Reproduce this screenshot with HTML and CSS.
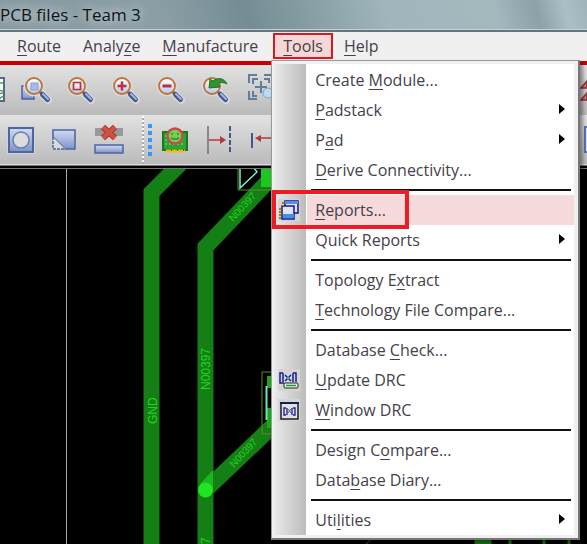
FILE: index.html
```
<!DOCTYPE html>
<html lang="en">
<head>
<meta charset="utf-8">
<title>PCB files - Team 3</title>
<link rel="stylesheet" href="styles.css">
</head>
<body>
<div class="app">
  <header class="titlebar"><span class="title">PCB files - Team 3</span></header>

  <nav class="menubar" aria-label="Main menu">
    <button class="menu-button"><u>R</u>oute</button>
    <button class="menu-button">Analy<u>z</u>e</button>
    <button class="menu-button"><u>M</u>anufacture</button>
    <div class="menu-root">
      <button class="menu-button open" aria-expanded="true"><u>T</u>ools</button>
      <div class="menu" role="menu">
        <button class="item" role="menuitem">Create <u>M</u>odule...</button>
        <button class="item sub" role="menuitem"><u>P</u>adstack</button>
        <button class="item sub" role="menuitem">P<u>a</u>d</button>
        <button class="item" role="menuitem"><u>D</u>erive Connectivity...</button>
        <hr>
        <button class="item selected" role="menuitem">
          <svg class="item-icon" width="22" height="22" viewBox="0 0 22 22"><path d="M0 0h22v22H0z" fill="#d4d4d4"/><path d="M7 2h13v12H7z" fill="#dfe5ff" stroke="#16168c" stroke-width="1.5"/><path d="M7 2h13v3H7z" fill="#5b8fd6"/><path d="M4 7h12v13H4z" fill="#dfe3f4" stroke="#16168c" stroke-width="1.5"/><path d="M5 15h11v4H5z" fill="#3c92e6"/><path d="M2 9v11M5 3v4" stroke="#9a8a00" stroke-width="2" stroke-dasharray="2 1"/><path d="M4 7v12" stroke="#b0283c" stroke-dasharray="2 2"/></svg><u>R</u>eports...</button>
        <button class="item sub" role="menuitem">Quick Reports</button>
        <hr>
        <button class="item" role="menuitem">Topology E<u>x</u>tract</button>
        <button class="item" role="menuitem"><u>T</u>echnology File Compare...</button>
        <hr>
        <button class="item" role="menuitem">Database <u>C</u>heck...</button>
        <button class="item" role="menuitem">
          <svg class="item-icon" width="22" height="22" viewBox="0 0 22 22"><path d="M0 0h22v22H0z" fill="#d4d4d4"/><path d="M5 4H2v10h4M15 4h3v9M5 4v9M15 4v9" fill="none" stroke="#1b1b96" stroke-width="1.5"/><path d="M7 6l6 6M13 6l-6 6" stroke="#1b1b96" stroke-width="1.5"/><path d="M8 9h4" stroke="#3f9dc0" stroke-width="2"/><rect x="6" y="14" width="14" height="5" rx="1" fill="#e8f4e8" stroke="#222"/><path d="M8 16.500h10" stroke="#239a23" stroke-width="1.500"/></svg><u>U</u>pdate DRC</button>
        <button class="item" role="menuitem">
          <svg class="item-icon" width="22" height="22" viewBox="0 0 22 22"><path d="M0 0h22v22H0z" fill="#d4d4d4"/><path d="M3 4h17v16H3z" fill="#e1e1e1" stroke="#1e1e2c" stroke-width="1.500"/><path d="M2 4h19" stroke="#16204a" stroke-width="2"/><path d="M8 9H6v7h2M15 9h2v7h-2M9 9v7M14 9v7" fill="none" stroke="#1b1b96" stroke-width="1.300"/><path d="M10 10l3 4m0-4l-3 4" stroke="#3f6dc0"/></svg><u>W</u>indow DRC</button>
        <hr>
        <button class="item" role="menuitem">Design C<u>o</u>mpare...</button>
        <button class="item" role="menuitem">Data<u>b</u>ase Diary...</button>
        <hr>
        <button class="item sub" role="menuitem">Uti<u>l</u>ities</button>
      </div>
    </div>
    <button class="menu-button"><u>H</u>elp</button>
  </nav>

  <svg class="defs" width="0" height="0" aria-hidden="true">
    <defs>
      <linearGradient id="steel" x1="0" y1="0" x2="0" y2="1"><stop offset="0" stop-color="#d3dbf0"/><stop offset="1" stop-color="#7f93c8"/></linearGradient>
      <linearGradient id="lens" x1="0" y1="0" x2="0" y2="1"><stop offset="0" stop-color="#fff"/><stop offset="1" stop-color="#b8c6ea"/></linearGradient>
      <symbol id="glass" viewBox="0 0 32 32">
        <path d="M18 18l8 8" stroke="#d8d8d8" stroke-width="8" stroke-linecap="round"/>
        <circle cx="12" cy="12" r="10.500" fill="#d8d8d8"/>
        <path d="M17 17l4 4" stroke="#9a5a28" stroke-width="3"/>
        <path d="M20.500 20.500l5 5" stroke="#40578f" stroke-width="5" stroke-linecap="round"/>
        <path d="M21 20l5 5" stroke="#a5b7e0" stroke-width="2" stroke-linecap="round"/>
        <circle cx="12" cy="12" r="8" fill="url(#lens)" stroke="#bd7439" stroke-width="1.800"/>
      </symbol>
    </defs>
  </svg>

  <div class="toolbar" role="toolbar" aria-label="Zoom">
    <button class="tool clipped-start" aria-label="Grid"><svg width="23" height="32" viewBox="0 0 23 32"><path d="M0 4h13v23H0z" fill="#fff" stroke="#50698c" stroke-width="2"/><path d="M0 9h12M0 14c5 0 7 3 12 3M0 23c5 0 7-4 12-4M8 25l4-3" fill="none" stroke="#4ba34b" stroke-width="1.500"/></svg></button>
    <button class="tool" aria-label="Zoom points"><svg width="32" height="32" viewBox="0 0 32 32"><path d="M2 12h12v13H2z" fill="url(#steel)" stroke="#4463a4" stroke-width="1.500"/><use href="#glass" width="32" height="32" x="2"/><path d="M11 9h7v7h-7z" fill="#a9badf" stroke="#8da2d2"/></svg></button>
    <button class="tool" aria-label="Zoom fit"><svg width="32" height="32" viewBox="0 0 32 32"><use href="#glass" width="32" height="32"/><path d="M8.500 8.500h7v7h-7z" fill="#e6e6f2" stroke="#b83236" stroke-width="1.700"/></svg></button>
    <button class="tool" aria-label="Zoom in"><svg width="32" height="32" viewBox="0 0 32 32"><use href="#glass" width="32" height="32"/><path d="M12 7.500v9M7.500 12h9" stroke="#b83236" stroke-width="2.500"/></svg></button>
    <button class="tool" aria-label="Zoom out"><svg width="32" height="32" viewBox="0 0 32 32"><use href="#glass" width="32" height="32"/><path d="M7.500 12h9" stroke="#b83236" stroke-width="3"/></svg></button>
    <button class="tool" aria-label="Zoom previous"><svg width="32" height="32" viewBox="0 0 32 32"><use href="#glass" width="32" height="32"/><path d="M9 14l1-9 3 2c5-4 11-3 14 3-4-2-7-2-9 0l2 3z" fill="#2d9631" stroke="#207324"/></svg></button>
    <button class="tool" aria-label="Zoom center"><svg width="32" height="32" viewBox="0 0 32 32"><path d="M4 9V1h8M19 1h9v8M4 17v8h8M8 10V5h5M19 5h5v4M8 17v5h4M16 7v12M10 13h12" fill="none" stroke="#617d9c" stroke-width="2"/><circle cx="23" cy="19" r="5" fill="#b8dcf4" stroke="#7ba2c6"/></svg></button>
    <button class="tool clipped-end" aria-label="3D view"><svg width="7" height="32" viewBox="0 0 7 32"><path d="M1 14l6-7v7zM1 26l6-7v7z" fill="#c67c80" stroke="#8f3439" stroke-width="1.500"/></svg></button>
  </div>

  <div class="toolbar lower" role="toolbar" aria-label="Shapes">
    <button class="tool first" aria-label="Shape void circle"><svg width="32" height="32" viewBox="0 0 32 32"><path d="M2 2h28v28H2z" fill="#d5d5d5"/><path d="M4 4h24v24H4z" fill="url(#steel)" stroke="#4c669f" stroke-width="2"/><circle cx="16" cy="16" r="8" fill="#dcdcdc" stroke="#697fac" stroke-width="1.500"/></svg></button>
    <button class="tool" aria-label="Shape edit"><svg width="32" height="32" viewBox="0 0 32 32"><path d="M5 6h22v19H17L5 13z" fill="url(#steel)" stroke="#4c669f" stroke-width="1.500"/><path d="M5 13l12 12H5z" fill="#dadada"/><path d="M5 13v12h12" fill="none" stroke="#4c669f" stroke-width="1.500" stroke-dasharray="3 1"/></svg></button>
    <button class="tool" aria-label="Delete islands"><svg width="32" height="32" viewBox="0 0 32 32"><path d="M2 4h28v8H2z" fill="#999"/><path d="M10 3l12 11M22 3L10 14" stroke="#a8352d" stroke-width="6"/><path d="M10 3l12 11M22 3L10 14" stroke="#cf5145" stroke-width="4"/><path d="M2 21h28v8H2z" fill="url(#steel)" stroke="#4c669f" stroke-width="1.500"/></svg></button>
    <span class="grip"></span>
    <span class="dots"></span>
    <button class="tool" aria-label="Board check"><svg width="32" height="32" viewBox="0 0 32 32"><path d="M4 8h24v18H4z" fill="#2da334" stroke="#167c20" stroke-width="2"/><path d="M6 12h20M6 16h20M6 20h20" stroke="#90d78b" stroke-dasharray="2 2"/><path d="M7 27h19" stroke="#f5ba00" stroke-width="3" stroke-dasharray="5 1"/><circle cx="16" cy="12" r="7.500" fill="#79cd56" stroke="#c94b49" stroke-width="2.500"/><path d="M12 10h2M18 10h2M12 14l2 1h4l2-1" fill="none" stroke="#2c8c32" stroke-width="1.500"/></svg></button>
    <button class="tool" aria-label="Spacing right"><svg width="32" height="32" viewBox="0 0 32 32"><path d="M4 2v28" stroke="#888" stroke-width="2"/><path d="M26 2v28" stroke="#40578a" stroke-width="2" stroke-dasharray="5 2"/><path d="M5 16h12" stroke="#b5373b" stroke-width="1.500"/><path d="M16 12l6 4-6 4z" fill="#b5373b"/></svg></button>
    <button class="tool" aria-label="Spacing left"><svg width="32" height="32" viewBox="0 0 32 32"><path d="M3 9v15" stroke="#40578a" stroke-width="2"/><path d="M10 14h20" stroke="#b5373b" stroke-width="1.500"/><path d="M12 11l-6 3 6 4z" fill="#b5373b"/></svg></button>
    <button class="tool clipped-end" aria-label="Window"><svg width="7" height="32" viewBox="0 0 7 32"><path d="M8 3H5v25h3" fill="#dfe5f5" stroke="#5b77b8" stroke-width="2"/></svg></button>
  </div>

  <main class="board">
    <svg class="traces" width="587" height="375" role="img" aria-label="Board traces">
      <path d="M66.500 0v375" stroke="#a8a8a8"/>
      <g fill="none" stroke="#147f14" stroke-width="16">
        <path d="M181-6l-29.500 29.500V375M278 2l-72.500 76V375M205.500 321L278 252"/>
      </g>
      <path d="M200 315l13-14v19z" fill="#1bb81b"/>
      <circle cx="205.500" cy="321" r="7.500" fill="#22e522"/>
      <path d="M261 0h20v18h-20z" fill="#1bc81b"/>
      <path d="M238 0v21h42" fill="none" stroke="#5f8a2d"/>
      <path d="M240 0v19l17-16-3-4" fill="none" stroke="#7ff0c0" stroke-width="1.500"/>
      <path d="M280 203h-18v62h18" fill="none" stroke="#5f8a2d"/>
      <path d="M267 207h8v12h-8zM267 239h8v20h-8z" fill="#18a818"/>
      <path d="M266.500 217v34" stroke="#66e8bd" stroke-width="2"/>
      <g class="nets">
        <text transform="translate(157 255) rotate(-90)">GND</text>
        <text transform="translate(210 221) rotate(-90)">N00397</text>
        <text transform="translate(210 375) rotate(-90)">7</text>
        <text class="small" transform="translate(233 53) rotate(-47)">N00397</text>
        <text class="small" transform="translate(234 299) rotate(-47)">N00397</text>
      </g>
      <path d="M366 375l8-7M475 368h16v7h-16zM509 368h2v7h-2zM543 368h2v7h-2zM568 368h2v7h-2z" fill="#147f14" stroke="#147f14"/>
    </svg>
  </main>
</div>
</body>
</html>
```
FILE: styles.css
```
*, *::before, *::after { box-sizing: border-box; }

body {
  margin: 0;
  background: #000;
  color: #45414a;
  font: 16px/20px "Open Sans", "Noto Sans", sans-serif;
}

button {
  margin: 0;
  padding: 0;
  border: 0;
  background: none;
  color: inherit;
  font: inherit;
}

u {
  text-underline-offset: 3px;
  text-decoration-thickness: 1px;
}

.app {
  display: flex;
  flex-direction: column;
  height: 100vh;
  overflow: hidden;
}

.titlebar {
  flex: none;
  height: 32px;
  padding: 5px 0;
  border-bottom: 2px solid #65757d;
  box-shadow: inset 0 -1px #c3d0d5;
  background: linear-gradient(75deg, #87989f 0%, #8b9ea6 28%, #758c95 42%, #819a9f 50%, #a0b6bc 66%, #a3b9be 84%, #8ca1a8 91%, #abc0c6 96%, #9eb3ba 100%);
  color: #101418;
  font-size: 17px;
}

.title {
  text-shadow: 0 0 8px #c8d4d8, 0 0 14px #c8d4d8;
}

.menubar {
  position: relative;
  z-index: 1;
  flex: none;
  display: flex;
  align-items: flex-start;
  height: 33px;
  padding: 1px 0 0 6px;
  border-bottom: 4px solid #c80000;
  background: #f0f0f0;
}

.menu-button {
  height: 26px;
  padding: 0 10px;
  border: 1px solid transparent;
  white-space: nowrap;
}

.menu-button.open {
  padding: 0 8px;
  border: 2px solid #d8191f;
  background: #f6d6d6;
}

.menu-root {
  position: relative;
  margin-left: 4px;
}

.menu {
  position: absolute;
  top: 27px;
  left: -2px;
  width: 309px;
  padding: 4px 4px 3px 2px;
  border: 1px solid #999;
  border-right: 2px solid #777;
  border-bottom: 2px solid #777;
  background: linear-gradient(90deg, #f0f0f0 2px, #e8e8e8 3px, #bcbcbc 34px, #fff 34px, #fff 302px, #f0f0f0 302px);
  box-shadow: inset 0 3px #f0f0f0, inset 0 -3px #f0f0f0, 3px 3px 4px #0006;
}

.item {
  position: relative;
  display: block;
  width: 100%;
  height: 30px;
  padding: 0 0 0 41px;
  text-align: left;
  white-space: nowrap;
}

.item-icon {
  position: absolute;
  top: 4px;
  left: 4px;
}

.item.sub::after {
  content: "";
  position: absolute;
  top: 9px;
  right: 9px;
  border: 5px solid transparent;
  border-left: 6px solid #000;
  border-right: 0;
}

.item.selected {
  background: linear-gradient(90deg, transparent 33px, #f6d9da 33px);
}

.item.selected::after {
  content: "";
  position: absolute;
  top: -5px;
  left: -2px;
  width: 137px;
  height: 39px;
  border: 4px solid #ed1c24;
}

.menu hr {
  height: 2px;
  margin: 4px 3px 4px 37px;
  border: 0;
  background: #111;
}

.defs { position: absolute; }

.toolbar {
  flex: none;
  display: flex;
  align-items: center;
  height: 50px;
  background: linear-gradient(#e2e2e2, #bababa);
}

.toolbar.lower { box-shadow: inset 0 -1px #ddd; }

.tool {
  flex: none;
  display: flex;
  justify-content: center;
  width: 45px;
}

.tool.first { width: 41px; }

.tool.clipped-start {
  width: 13px;
  height: 32px;
  justify-content: flex-start;
  overflow: hidden;
}

.tool.clipped-start svg {
  flex: none;
  margin-left: -9px;
}

.tool.clipped-end {
  width: 7px;
  margin-left: auto;
}

.grip {
  width: 2px;
  height: 48px;
  margin-left: 11px;
  background: repeating-linear-gradient(#fff 0 2px, #aaa 2px 4px);
}

.dots {
  width: 4px;
  height: 33px;
  margin-left: 4px;
  background: repeating-linear-gradient(#3399ff 0 4px, transparent 4px 7px);
}

.board {
  flex: 1;
  min-height: 0;
  border-top: 4px double #777;
  background: #000;
  overflow: hidden;
}

.traces { display: block; }

.nets {
  fill: #22d522;
  font: 12px "Liberation Sans", sans-serif;
}

.small { font-size: 10px; }
```
